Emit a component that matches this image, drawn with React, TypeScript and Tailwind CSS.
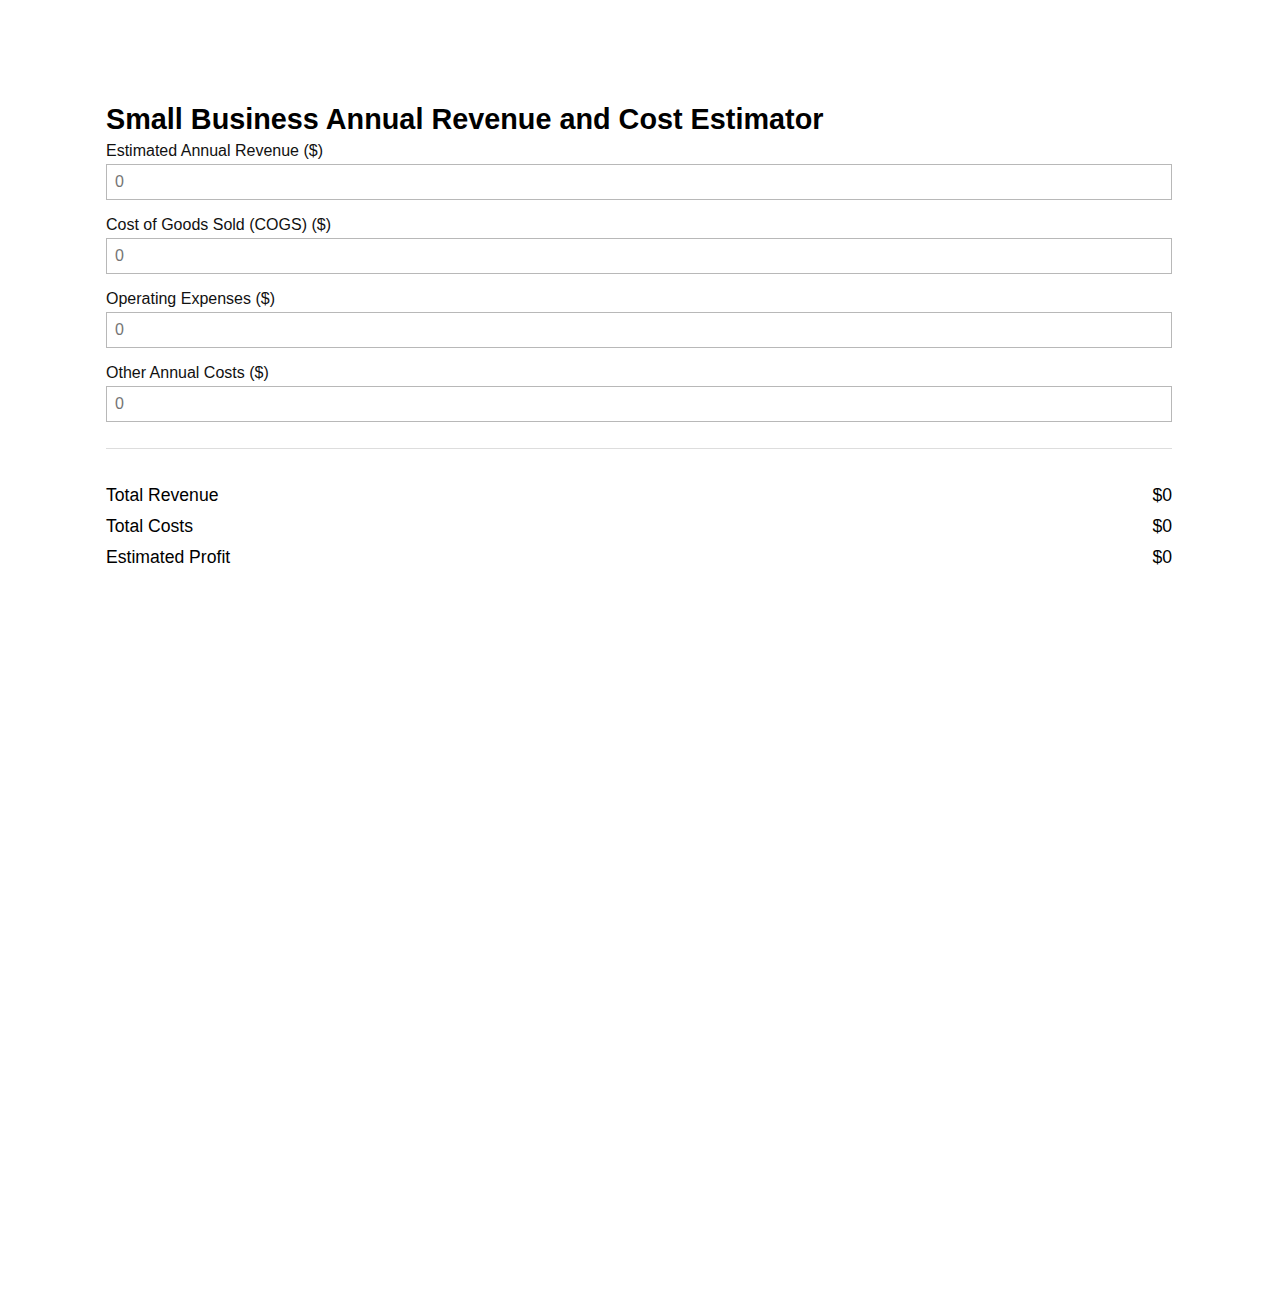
import { useState } from 'react';

const fields = [
  { key: 'revenue', label: 'Estimated Annual Revenue ($)' },
  { key: 'cogs', label: 'Cost of Goods Sold (COGS) ($)' },
  { key: 'opex', label: 'Operating Expenses ($)' },
  { key: 'other', label: 'Other Annual Costs ($)' },
] as const;

type Key = (typeof fields)[number]['key'];

const fmt = (n: number) => '$' + Math.round(n).toLocaleString('en-US');

export default function App() {
  const [values, setValues] = useState<Record<Key, string>>({ revenue: '', cogs: '', opex: '', other: '' });

  const num = (k: Key) => parseFloat(values[k]) || 0;
  const totalRevenue = num('revenue');
  const totalCosts = num('cogs') + num('opex') + num('other');
  const profit = totalRevenue - totalCosts;

  const rows = [
    { label: 'Total Revenue', value: totalRevenue },
    { label: 'Total Costs', value: totalCosts },
    { label: 'Estimated Profit', value: profit },
  ];

  return (
    <div className="min-h-screen bg-white px-[106px] pt-[103px] text-black font-['Liberation_Sans',Arial,sans-serif]">
      <h1 className="text-[28.8px] leading-[33px] font-bold mb-[5px]">
        Small Business Annual Revenue and Cost Estimator
      </h1>

      {fields.map((f) => (
        <div key={f.key} className="mb-[15px]">
          <label htmlFor={f.key} className="block pt-[1px] text-[16px] leading-[18px] mb-[4px] text-[#111]">
            {f.label}
          </label>
          <input
            id={f.key}
            type="number"
            placeholder="0"
            value={values[f.key]}
            onChange={(e) => setValues({ ...values, [f.key]: e.target.value })}
            className="block w-full h-[36px] border border-[#b8b8b8] px-[8px] text-[16px] leading-[18px] placeholder:text-[#757575] outline-none"
          />
        </div>
      ))}

      <hr className="mt-[26px] border-0 border-t border-[#dddddd]" />

      {/* summary */}
      <div className="mt-[31px]">
        {rows.map((r) => (
          <div key={r.label} className="flex justify-between text-[17.6px] leading-[31px]">
            <span>{r.label}</span>
            <span>{fmt(r.value)}</span>
          </div>
        ))}
      </div>
    </div>
  );
}
